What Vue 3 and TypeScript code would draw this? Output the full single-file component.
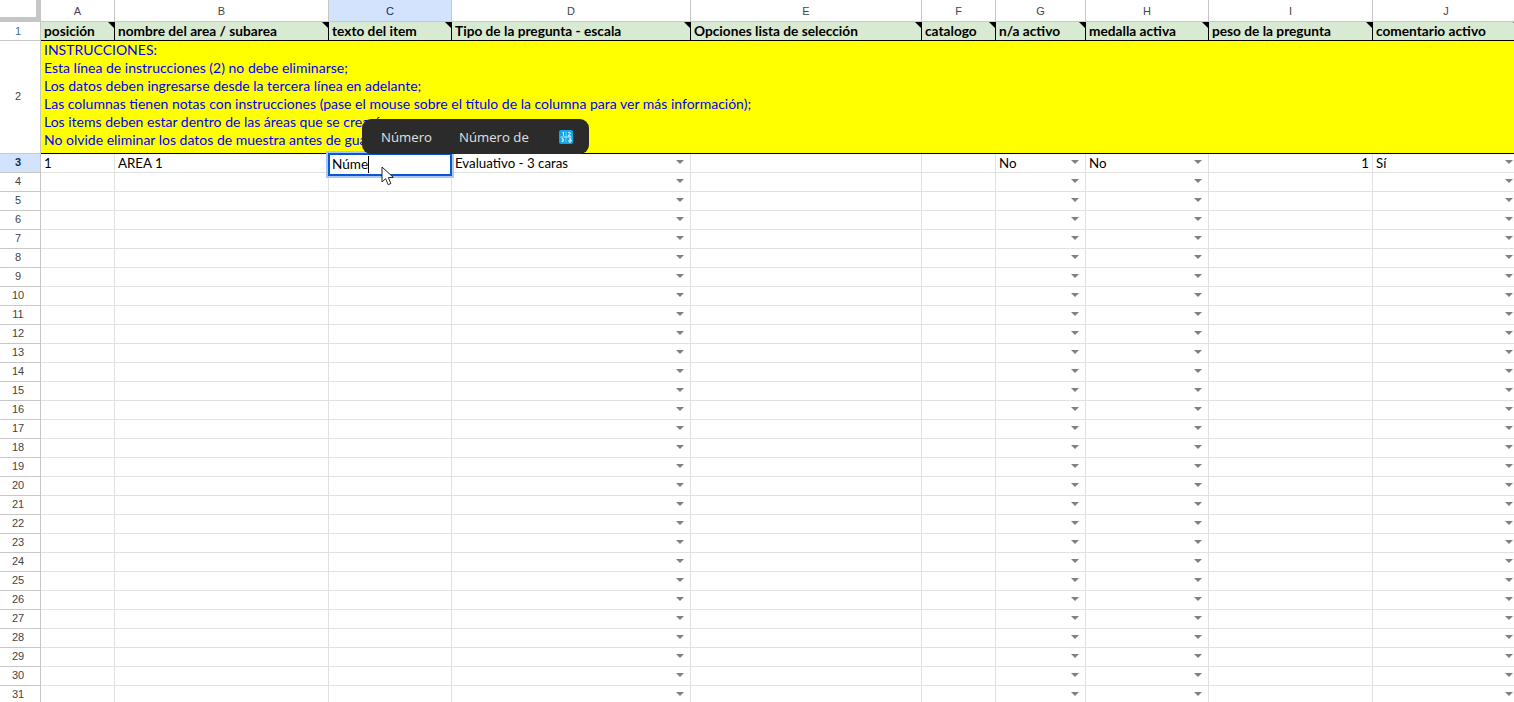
<script setup lang="ts">
const cols = [
  { id: 'A', title: 'posición', w: 74 },
  { id: 'B', title: 'nombre del area / subarea', w: 214 },
  { id: 'C', title: 'texto del item', w: 123 },
  { id: 'D', title: 'Tipo de la pregunta - escala', w: 239, drop: true },
  { id: 'E', title: 'Opciones lista de selección', w: 231 },
  { id: 'F', title: 'catalogo', w: 74 },
  { id: 'G', title: 'n/a activo', w: 90, drop: true },
  { id: 'H', title: 'medalla activa', w: 123, drop: true },
  { id: 'I', title: 'peso de la pregunta', w: 164 },
  { id: 'J', title: 'comentario activo', w: 147, drop: true },
]
const gridCols = '41px ' + cols.map((c) => c.w + 'px').join(' ')
const instructions = [
  'INSTRUCCIONES:',
  'Esta línea de instrucciones (2) no debe eliminarse;',
  'Los datos deben ingresarse desde la tercera línea en adelante;',
  'Las columnas tienen notas con instrucciones (pase el mouse sobre el título de la columna para ver más información);',
  'Los items deben estar dentro de las áreas que se crearán;',
  'No olvide eliminar los datos de muestra antes de guardar.',
]
const row3: Record<string, string> = { A: '1', B: 'AREA 1', D: 'Evaluativo - 3 caras', G: 'No', H: 'No', I: '1', J: 'Sí' }
const rows = Array.from({ length: 28 }, (_, i) => i + 4)
</script>

<template>
  <div class="sheet">
    <div class="grid" :style="{ gridTemplateColumns: gridCols }">
      <div class="corner"></div>
      <div v-for="c in cols" :key="c.id" class="colhead" :class="{ active: c.id === 'C' }">{{ c.id }}</div>

      <div class="rowhead r1">1</div>
      <div v-for="c in cols" :key="c.id" class="title">
        <span>{{ c.title }}</span><i class="note"></i>
      </div>

      <div class="rowhead">2</div>
      <div class="instructions">
        <div v-for="line in instructions" :key="line">{{ line }}</div>
      </div>

      <div class="rowhead active r3">3</div>
      <div v-for="c in cols" :key="c.id" class="cell" :class="{ num: c.id === 'I' }">
        {{ row3[c.id] }}<i v-if="c.drop" class="arrow"></i>
      </div>

      <template v-for="r in rows" :key="r">
        <div class="rowhead">{{ r }}</div>
        <div v-for="c in cols" :key="c.id" class="cell">
          <i v-if="c.drop" class="arrow"></i>
        </div>
      </template>
    </div>

    <div class="editor">Núme<span class="caret"></span></div>

    <div class="popup">
      <span class="sug">Número</span>
      <span class="sug">Número de</span>
      <svg class="keypad" width="14" height="14" viewBox="0 0 14 14">
        <rect width="14" height="14" rx="2" fill="#0ea5e9" />
        <path d="M1.5 7h11" stroke="#bfe8fb" stroke-width="1" />
        <path d="M7 1.5v11" stroke="#bfe8fb" stroke-width=".6" />
        <path d="M3.5 2.5l1-.5v4M9 3q1.5-1.5 2.5 0L9 6h3M2.500 9q2-1 2 .5t-1 .5q1 0 1 1t-2 .5M11 8v5M9 11h3.500L11 8" stroke="#fff" stroke-width=".9" fill="none" />
      </svg>
    </div>

    <svg class="cursor" width="14" height="20" viewBox="0 0 14 20">
      <path d="M1 1v15l3.600-3.300 2.600 6 2.700-1.200-2.600-5.800 5-.4z" fill="#fff" stroke="#222" stroke-width="1" stroke-linejoin="round" />
    </svg>
  </div>
</template>

<style>
html, body { margin: 0; background: #fff; overflow: hidden; }
</style>

<style scoped>
.sheet {
  position: relative;
  width: 1514px;
  height: 702px;
  overflow: hidden;
  background: #fff;
  font-family: Lato, "Liberation Sans", sans-serif;
  font-size: 13.300px;
  color: #000;
}
.grid {
  display: grid;
  grid-auto-rows: 19px;
  grid-template-rows: 22px 19px 113px;
  width: max-content;
}
.corner {
  background: #fff;
  border-right: 5px solid #c4c7c5;
  border-bottom: 5px solid #c4c7c5;
  box-sizing: border-box;
}
.colhead {
  box-sizing: border-box;
  border-right: 1px solid #c7c7c7;
  border-bottom: 1px solid #c7c7c7;
  font: 11px "Liberation Sans", sans-serif;
  color: #444;
  display: flex;
  align-items: center;
  justify-content: center;
}
.colhead.active, .rowhead.active { background: #d3e3fd; color: #0b2e6b; }
.rowhead {
  box-sizing: border-box;
  border-right: 1px solid #c7c7c7;
  border-bottom: 1px solid #c7c7c7;
  font: 11px "Liberation Sans", sans-serif;
  color: #444;
  display: flex;
  align-items: center;
  justify-content: center;
  padding: 0 4px 2px 0;
}
.rowhead.r1 { color: #3f6ca8; padding-bottom: 0; }
.rowhead.r3 { font-weight: 700; }
.title {
  position: relative;
  box-sizing: border-box;
  background: #d9ead3;
  border-right: 1px solid #000;
  border-bottom: 1px solid #000;
  padding-left: 3px;
  font-weight: 700;
  font-size: 13.700px;
  line-height: 18px;
  white-space: nowrap;
  overflow: hidden;
}
.note {
  position: absolute;
  top: 0;
  right: 0;
  border-top: 6px solid #000;
  border-left: 6px solid transparent;
}
.instructions {
  grid-column: 2 / -1;
  box-sizing: border-box;
  background: #ff0;
  color: #00f;
  border-bottom: 1px solid #000;
  padding: 0 3px;
  font-size: 14px;
  line-height: 18px;
  white-space: nowrap;
}
.cell {
  position: relative;
  box-sizing: border-box;
  border-right: 1px solid #e1e1e1;
  border-bottom: 1px solid #e1e1e1;
  padding: 0 3px;
  line-height: 18px;
  white-space: nowrap;
}
.cell.num { text-align: right; }
.arrow {
  position: absolute;
  right: 6px;
  top: 6px;
  border-top: 4.500px solid #808080;
  border-left: 4px solid transparent;
  border-right: 4px solid transparent;
}
.editor {
  position: absolute;
  left: 328px;
  top: 153px;
  width: 124px;
  height: 23px;
  box-sizing: border-box;
  background: #fff;
  border: 2px solid #0b57d0;
  box-shadow: 0 0 0 2px #a8c7fa;
  padding-left: 2px;
  font-size: 13.600px;
  line-height: 19px;
  white-space: nowrap;
}
.caret {
  display: inline-block;
  width: 1px;
  height: 17px;
  background: #000;
  vertical-align: -4px;
}
.popup {
  position: absolute;
  left: 362px;
  top: 119px;
  width: 227px;
  height: 35px;
  box-sizing: border-box;
  border-radius: 9px;
  background: #2b2b2b;
  display: flex;
  align-items: center;
  padding-left: 19px;
  font-family: "Open Sans", "Liberation Sans", sans-serif;
  font-size: 13.200px;
  color: #e0e0e0;
}
.sug { margin-right: 27px; }
.sug + .sug { margin-right: 30px; }
.keypad { flex: none; }
.cursor {
  position: absolute;
  left: 381px;
  top: 166px;
}
</style>
